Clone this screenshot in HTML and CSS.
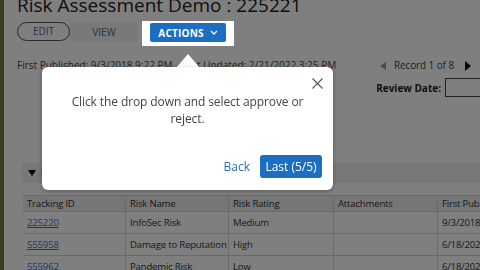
FILE: index.html
```html
<!DOCTYPE html>
<html>
<head>
<meta charset="utf-8">
<link rel="stylesheet" href="styles.css">
</head>
<body>
<div class="app">
  <div class="strip"></div>
  <main class="main">
    <h1 class="title">Risk Assessment Demo : 225221</h1>
    <div class="toolbar">
      <span class="btn-edit">EDIT</span>
      <span class="btn-view">VIEW</span>
      <span class="spot">
        <span class="btn-actions">ACTIONS
          <svg class="chev" width="8" height="5" viewBox="0 0 8 5"><path d="M1 1 L4 4 L7 1" fill="none" stroke="#fff" stroke-width="1.4"/></svg>
        </span>
      </span>
    </div>
    <div class="meta">
      <div class="dates"><span>First Published: 9/3/2018 9:22 PM</span><span>Last Updated: 2/21/2022 3:25 PM</span></div>
      <div class="nav">
        <span class="tri-l"></span>
        <span>Record 1 of 8</span>
        <span class="tri-r"></span>
      </div>
    </div>
    <div class="review">
      <span class="review-label">Review Date:</span>
      <span class="review-input"></span>
    </div>
    <div class="section">
      <span class="caret"></span>
      <span class="section-title">Related Risks</span>
    </div>
    <table class="grid">
      <thead>
        <tr><th>Tracking ID</th><th>Risk Name</th><th>Risk Rating</th><th>Attachments</th><th>First Publi</th></tr>
      </thead>
      <tbody>
        <tr><td><a>225220</a></td><td>InfoSec Risk</td><td>Medium</td><td></td><td>9/3/2018</td></tr>
        <tr><td><a>555958</a></td><td>Damage to Reputation</td><td>High</td><td></td><td>6/18/2021</td></tr>
        <tr><td><a>555962</a></td><td>Pandemic Risk</td><td>Low</td><td></td><td>6/18/2021</td></tr>
      </tbody>
    </table>
  </main>
</div>
<div class="overlay"></div>
<div class="pointer"></div>
<div class="popup">
  <svg class="close" width="11" height="11" viewBox="0 0 11 11"><path d="M0.5 0.5 L10.5 10.5 M10.5 0.5 L0.5 10.5" stroke="#555" stroke-width="1.1"/></svg>
  <p class="msg">Click the drop down and select approve or<br>reject.</p>
  <div class="popup-actions">
    <span class="back">Back</span>
    <span class="last">Last (5/5)</span>
  </div>
</div>
</body>
</html>
```
FILE: styles.css
```css
html, body {
  margin: 0;
  padding: 0;
  background: #fff;
  overflow: hidden;
  width: 480px;
  height: 270px;
}
body {
  font-family: "Open Sans", "Liberation Sans", sans-serif;
  color: #333;
}
.app {
  display: flex;
  width: 480px;
  height: 270px;
}
.strip {
  width: 4px;
  flex: none;
  background: #6f7a44;
}
.main {
  flex: 1;
  padding-left: 13px;
  min-width: 0;
}
.title {
  margin: -7px 0 0 0;
  font-size: 19px;
  line-height: 24px;
  font-weight: 400;
  color: #222;
  white-space: nowrap;
}
.toolbar {
  display: flex;
  align-items: flex-start;
  margin-top: 4px;
  height: 25px;
}
.btn-edit {
  margin-top: 1px;
  box-sizing: border-box;
  width: 53px;
  height: 19px;
  border: 1px solid #555;
  border-radius: 10px;
  font-size: 10px;
  line-height: 17px;
  text-align: center;
  color: #46688f;
}
.btn-view {
  margin-top: 2px;
  width: 68px;
  height: 19px;
  background: #f3f3f3;
  font-size: 10px;
  line-height: 19px;
  text-align: center;
  color: #46688f;
}
.spot {
  position: relative;
  z-index: 20;
  margin-left: 4px;
  padding: 2px 8px 4px;
  background: #fff;
  display: flex;
}
.btn-actions {
  display: flex;
  align-items: center;
  justify-content: center;
  gap: 6px;
  width: 76px;
  height: 19px;
  background: #1b6ec2;
  border-radius: 2px;
  color: #fff;
  font-size: 10px;
  font-weight: 700;
  letter-spacing: 0.2px;
}
.chev { display: block; }
.meta {
  display: flex;
  justify-content: space-between;
  margin-top: 13px;
  height: 13px;
  font-size: 10px;
  line-height: 13px;
  color: #444;
  white-space: nowrap;
}
.dates {
  display: flex;
  gap: 9px;
}
.nav {
  display: flex;
  align-items: center;
  gap: 8px;
  padding-right: 9px;
  letter-spacing: -0.1px;
}
.tri-l {
  width: 0; height: 0;
  border-top: 4px solid transparent;
  border-bottom: 4px solid transparent;
  border-right: 6px solid #999;
}
.tri-r {
  width: 0; height: 0;
  border-top: 5px solid transparent;
  border-bottom: 5px solid transparent;
  border-left: 6px solid #000;
  margin-left: 3px;
}
.review {
  display: flex;
  justify-content: flex-end;
  align-items: center;
  gap: 4px;
  margin-top: 6px;
  height: 19px;
  margin-right: -2px;
}
.review-label {
  font-size: 10px;
  font-weight: 700;
  color: #222;
}
.review-input {
  box-sizing: border-box;
  width: 37px;
  height: 19px;
  border: 1px solid #444;
  background: #fff;
}
.section {
  display: flex;
  align-items: center;
  gap: 5px;
  margin-top: 66px;
  margin-left: 5px;
  height: 20px;
  padding-left: 6px;
  background: #f0f0f0;
  font-size: 10px;
  font-weight: 700;
}
.caret {
  width: 0; height: 0;
  border-left: 4px solid transparent;
  border-right: 4px solid transparent;
  border-top: 6px solid #000;
}
.grid {
  margin-top: 12px;
  margin-left: 6px;
  border-collapse: collapse;
  table-layout: fixed;
  width: 460px;
  font-size: 9.6px;
  letter-spacing: -0.2px;
  color: #333;
  white-space: nowrap;
}
.grid th, .grid td {
  border-right: 1px solid #d4d4d4;
  border-bottom: 1px solid #d4d4d4;
  text-align: left;
  padding: 0 3px 0 4px;
  overflow: hidden;
}
.grid th {
  font-weight: 400;
  background: #ececec;
  height: 15px;
  line-height: 15px;
  border-top: 1px solid #d4d4d4;
}
.grid td {
  height: 21px;
  line-height: 21px;
}
.grid th:nth-child(1) { width: 95px; }
.grid th:nth-child(2) { width: 95px; }
.grid th:nth-child(3) { width: 97px; }
.grid th:nth-child(4) { width: 96px; }
.grid a {
  color: #3b6fc6;
  text-decoration: underline;
}
.overlay {
  position: fixed;
  inset: 0;
  background: rgba(0, 0, 0, 0.5);
  z-index: 10;
}
.pointer {
  position: absolute;
  z-index: 30;
  left: 176px;
  top: 54px;
  width: 0; height: 0;
  border-left: 12px solid transparent;
  border-right: 12px solid transparent;
  border-bottom: 14px solid #fff;
}
.popup {
  position: absolute;
  z-index: 30;
  left: 42px;
  top: 67px;
  width: 291px;
  height: 123px;
  box-sizing: border-box;
  background: #fff;
  border-radius: 6px;
  box-shadow: 0 1px 4px rgba(0,0,0,0.3);
  display: flex;
  flex-direction: column;
  align-items: center;
}
.close {
  position: absolute;
  right: 10px;
  top: 11px;
}
.msg {
  margin: 26px 0 0 0;
  font-size: 12px;
  letter-spacing: -0.1px;
  line-height: 17px;
  color: #444;
  text-align: center;
}
.popup-actions {
  display: flex;
  align-items: center;
  gap: 10px;
  align-self: flex-end;
  margin-top: auto;
  margin-bottom: 12px;
  margin-right: 11px;
}
.back {
  font-size: 12px;
  color: #2f6db5;
}
.last {
  display: block;
  width: 62px;
  height: 23px;
  line-height: 23px;
  text-align: center;
  background: #1b6ec2;
  border-radius: 3px;
  color: #fff;
  font-size: 12px;
}
```
